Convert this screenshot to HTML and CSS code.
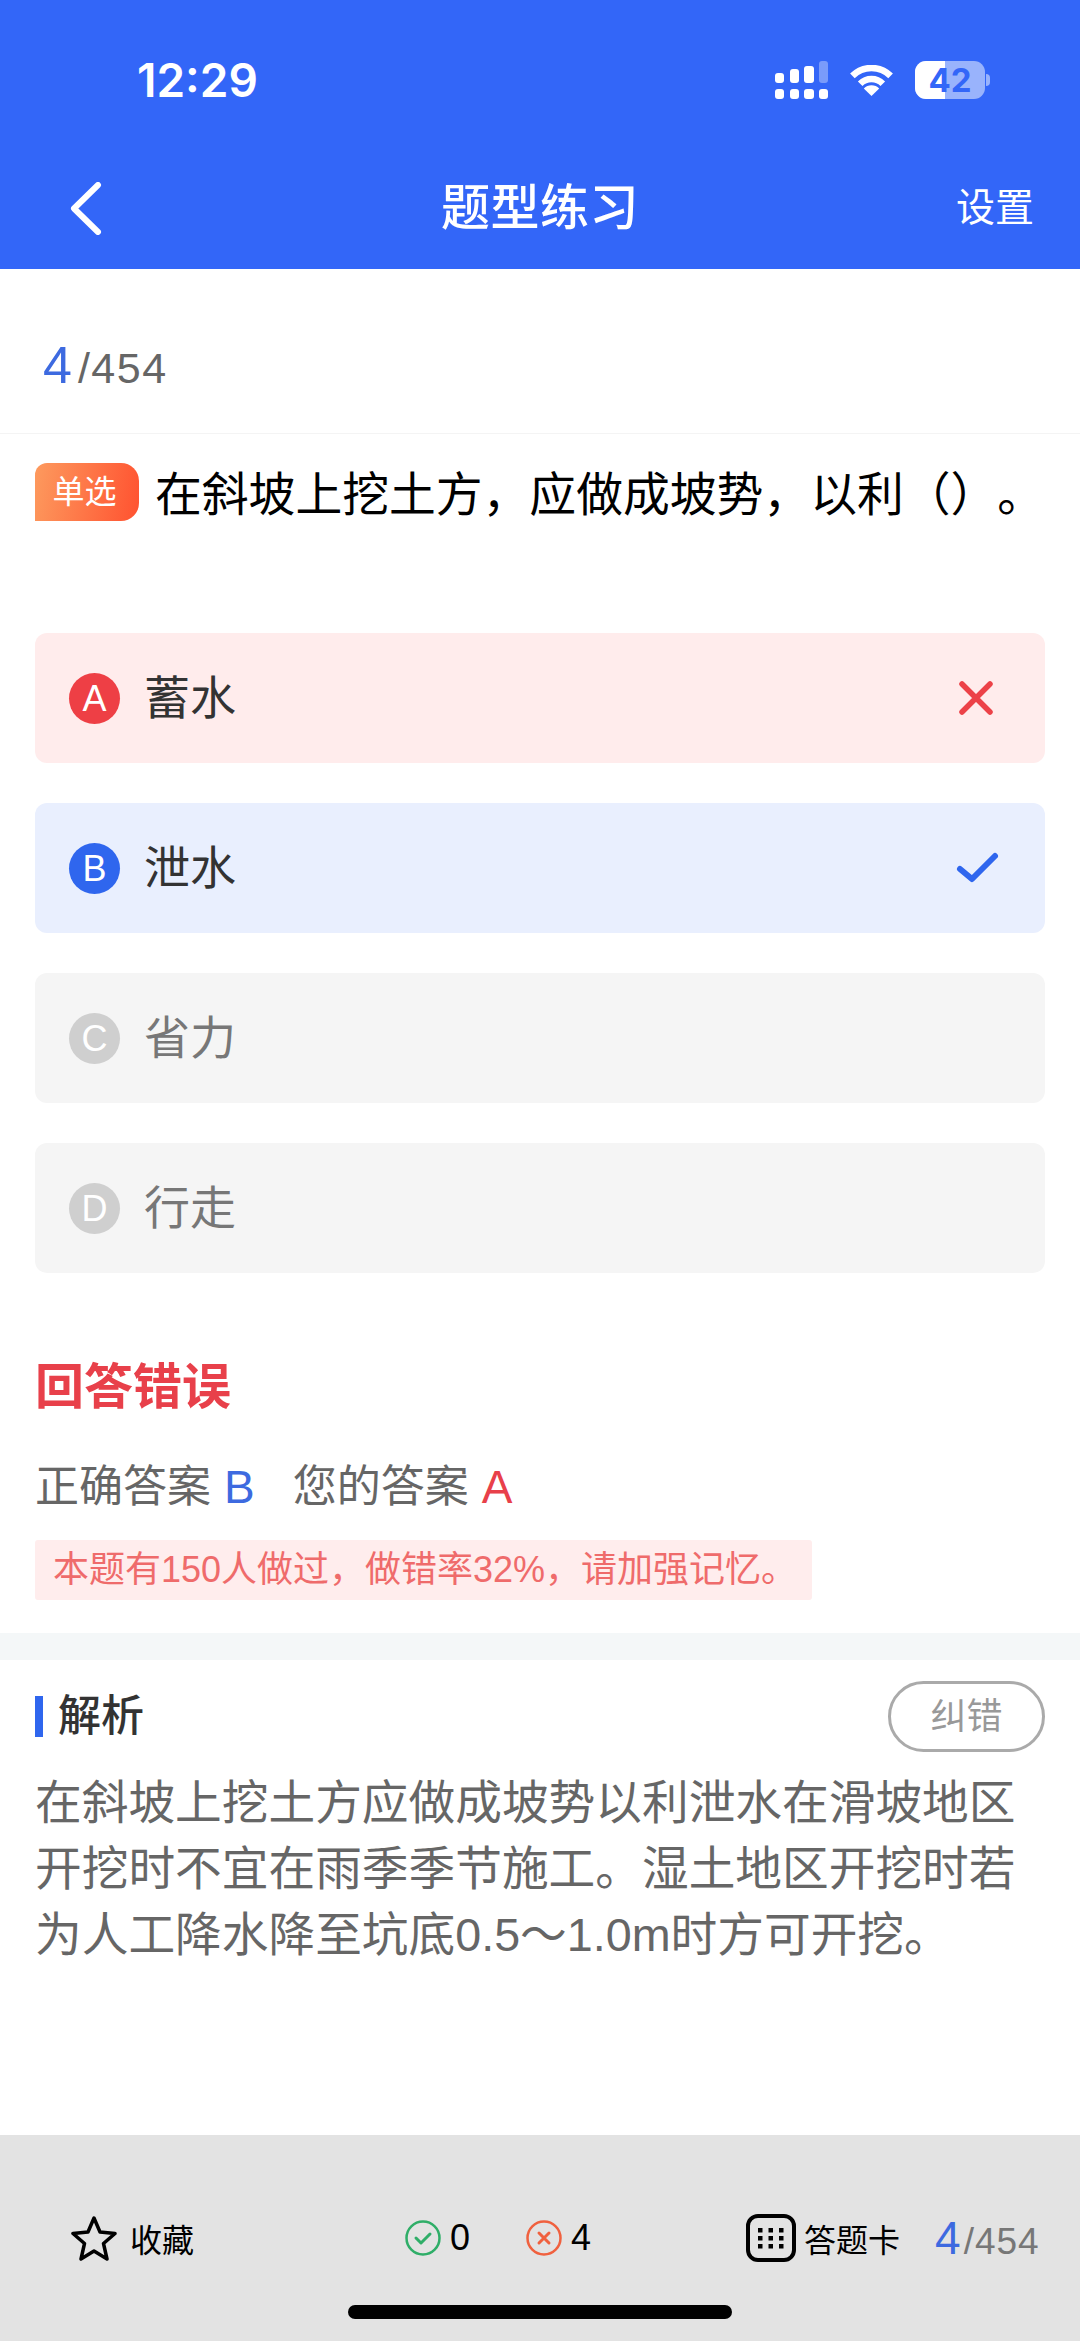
FILE: index.html
```html
<!DOCTYPE html>
<html lang="zh-CN">
<head>
<meta charset="utf-8">
<title>题型练习</title>
<link rel="stylesheet" href="styles.css">
</head>
<body>
<div class="page">
  <header class="header">
    <div class="status">
      <span class="time">12:29</span>
      <div class="status-icons">
        <svg class="signal" width="53" height="38" viewBox="0 0 53 38">
          <rect x="0" y="12" width="9" height="10" rx="3" fill="#fff"/>
          <rect x="15" y="8" width="9" height="14" rx="3" fill="#fff"/>
          <rect x="29" y="5" width="10" height="17" rx="3" fill="#fff"/>
          <rect x="44" y="0" width="9" height="22" rx="3" fill="#fff" fill-opacity=".35"/>
          <rect x="0" y="28" width="9" height="10" rx="3" fill="#fff"/>
          <rect x="15" y="28" width="9" height="10" rx="3" fill="#fff"/>
          <rect x="29" y="28" width="10" height="10" rx="3" fill="#fff"/>
          <rect x="44" y="28" width="9" height="10" rx="3" fill="#fff"/>
        </svg>
        <svg class="wifi" width="47" height="31" viewBox="0 0 47 31">
          <path d="M4.4 10.9A27 27 0 0 1 42.600 10.900" fill="none" stroke="#fff" stroke-width="6.500"/>
          <path d="M12.2 18.700A16 16 0 0 1 34.800 18.700" fill="none" stroke="#fff" stroke-width="6.500"/>
          <path d="M23.500 31L15.800 23.500A11 11 0 0 1 31.200 23.500Z" fill="#fff"/>
        </svg>
        <div class="battery">
          <div class="battery-body">
            <span class="battery-fill"></span>
            <span class="battery-num">42</span>
          </div>
          <span class="battery-nub"></span>
        </div>
      </div>
    </div>
    <nav class="nav">
      <svg class="back" width="33" height="53" viewBox="0 0 33 53">
        <path d="M29 3L5 26.500L29 50" fill="none" stroke="#fff" stroke-width="6" stroke-linecap="round" stroke-linejoin="round"/>
      </svg>
      <h1 class="nav-title">题型练习</h1>
      <span class="nav-action">设置</span>
    </nav>
  </header>

  <div class="counter"><span class="counter-now">4</span><span class="counter-total">/454</span></div>

  <section class="question">
    <span class="tag">单选</span>
    <p class="question-text">在斜坡上挖土方，应做成坡势，以利（）。</p>
  </section>

  <section class="options">
    <div class="option option-wrong">
      <span class="letter">A</span><span class="option-text">蓄水</span>
      <svg class="mark" width="48" height="48" viewBox="0 0 48 48">
        <path d="M10 10L38 38M38 10L10 38" fill="none" stroke="#ec4248" stroke-width="5.500" stroke-linecap="round"/>
      </svg>
    </div>
    <div class="option option-right">
      <span class="letter">B</span><span class="option-text">泄水</span>
      <svg class="mark" width="48" height="48" viewBox="0 0 48 48">
        <path d="M8 25L20 35L43 12" fill="none" stroke="#2f66ee" stroke-width="6" stroke-linecap="round" stroke-linejoin="round"/>
      </svg>
    </div>
    <div class="option option-muted">
      <span class="letter">C</span><span class="option-text">省力</span>
    </div>
    <div class="option option-muted">
      <span class="letter">D</span><span class="option-text">行走</span>
    </div>
  </section>

  <section class="result">
    <h2 class="result-title">回答错误</h2>
    <p class="result-answers">
      <span>正确答案</span><span class="ans-blue">B</span><span class="ans-label">您的答案</span><span class="ans-red">A</span>
    </p>
    <p class="result-note">本题有150人做过，做错率32%，请加强记忆。</p>
  </section>

  <div class="band"></div>

  <section class="analysis">
    <div class="analysis-head">
      <h2 class="analysis-title">解析</h2>
      <span class="report">纠错</span>
    </div>
    <p class="analysis-text">在斜坡上挖土方应做成坡势以利泄水在滑坡地区开挖时不宜在雨季季节施工。湿土地区开挖时若为人工降水降至坑底0.5～1.0m时方可开挖。</p>
  </section>

  <footer class="footer">
    <div class="footer-row">
      <div class="fav">
        <svg width="46" height="47" viewBox="0 0 46 47">
          <path d="M23 3L29 17L44 18.500L32.500 28.500L36 44L23 36L10 44L13.500 28.500L2 18.500L17 17Z" fill="none" stroke="#000" stroke-width="3.500" stroke-linejoin="round"/>
        </svg>
        <span>收藏</span>
      </div>
      <div class="tally">
        <svg width="36" height="36" viewBox="0 0 36 36">
          <circle cx="18" cy="18" r="16.500" fill="none" stroke="#2fae68" stroke-width="2.500"/>
          <path d="M11 18L16 23L25 14" fill="none" stroke="#2fae68" stroke-width="3" stroke-linecap="round" stroke-linejoin="round"/>
        </svg>
        <span>0</span>
      </div>
      <div class="tally tally-wrong">
        <svg width="36" height="36" viewBox="0 0 36 36">
          <circle cx="18" cy="18" r="16.500" fill="none" stroke="#f0613f" stroke-width="2.500"/>
          <path d="M13 13L23 23M23 13L13 23" fill="none" stroke="#f0613f" stroke-width="3" stroke-linecap="round"/>
        </svg>
        <span>4</span>
      </div>
      <div class="card">
        <svg width="50" height="48" viewBox="0 0 50 48">
          <rect x="2" y="2" width="46" height="44" rx="10" fill="none" stroke="#000" stroke-width="4"/>
          <g fill="#000">
            <rect x="12" y="14" width="4.500" height="4.500"/><rect x="22.500" y="14" width="4.500" height="4.500"/><rect x="33" y="14" width="4.500" height="4.500"/>
            <rect x="12" y="22" width="4.500" height="4.500"/><rect x="22.500" y="22" width="4.500" height="4.500"/><rect x="33" y="22" width="4.500" height="4.500"/>
            <rect x="12" y="30" width="4.500" height="4.500"/><rect x="22.500" y="30" width="4.500" height="4.500"/><rect x="33" y="30" width="4.500" height="4.500"/>
          </g>
        </svg>
        <span>答题卡</span>
      </div>
      <div class="footer-count"><span class="footer-now">4</span><span class="footer-total">/454</span></div>
    </div>
    <div class="home"></div>
  </footer>
</div>
</body>
</html>
```

FILE: styles.css
```css
* { box-sizing: border-box; margin: 0; padding: 0; }
html, body { width: 1080px; height: 2341px; background: #fff; }
body { font-family: "Liberation Sans", "Noto Sans CJK SC", sans-serif; overflow: hidden; text-spacing-trim: space-all; }
.page { width: 1080px; height: 2341px; display: flex; flex-direction: column; }

.header { height: 269px; background: #3366f8; color: #fff; }
.status { height: 160px; display: flex; align-items: center; justify-content: space-between; padding: 0 90px 0 137px; }
.time { font-family: Inter, "Liberation Sans", sans-serif; font-size: 46px; font-weight: 600; line-height: 50px; }
.status-icons { display: flex; align-items: center; gap: 20px; }
.wifi { margin-top: 1px; }
.battery { display: flex; align-items: center; margin-left: 0; }
.battery-body { position: relative; width: 70px; height: 38px; border-radius: 11px; background: rgba(255,255,255,.5); overflow: hidden; display: flex; align-items: center; justify-content: center; }
.battery-fill { position: absolute; left: 0; top: 0; bottom: 0; width: 30px; background: #fff; }
.battery-num { position: relative; font-family: Inter, sans-serif; font-size: 33px; font-weight: 700; line-height: 38px; color: #3366f8; }
.battery-nub { width: 4px; height: 12px; margin-left: 1px; border-radius: 0 4px 4px 0; background: rgba(255,255,255,.5); }

.nav { height: 96px; display: grid; grid-template-columns: 1fr auto 1fr; align-items: center; padding: 0 46px; }
.back { margin-left: 23px; }
.nav-title { font-size: 49px; font-weight: 500; line-height: 60px; letter-spacing: .5px; }
.nav-action { justify-self: end; font-size: 39px; line-height: 50px; }

.counter { height: 165px; padding: 68px 0 0 43px; display: flex; align-items: baseline; border-bottom: 1px solid #f4f4f4; line-height: 56px; }
.counter-now { font-size: 52px; color: #3d6ae0; }
.counter-total { margin-left: 6px; font-size: 43px; letter-spacing: 1.500px; color: #666; }

.question { height: 199px; padding: 29px 0 0 35px; display: flex; gap: 16px; align-items: flex-start; }
.tag { width: 104px; height: 58px; padding-right: 5px; border-radius: 12px 18px 18px 0; background: linear-gradient(100deg, #fd9a5e, #ff5230); color: #fff; font-size: 32px; line-height: 58px; text-align: center; }
.question-text { margin-top: 3px; font-size: 46.800px; line-height: 58px; color: #000; white-space: nowrap; }

.options { display: flex; flex-direction: column; gap: 40px; padding: 0 35px; }
.option { height: 130px; border-radius: 12px; display: flex; align-items: center; padding: 0 45px 0 34px; }
.letter { flex: none; width: 51px; height: 51px; border-radius: 50%; color: #fff; font-size: 36px; line-height: 51px; text-align: center; }
.option-text { flex: 1; margin-left: 24px; font-size: 46px; line-height: 60px; color: #333; }
.option-wrong { background: #ffecec; }
.option-wrong .letter { background: #ee3f45; }
.option-right { background: #e9effe; }
.option-right .letter { background: #2f66ee; }
.option-muted { background: #f5f5f5; }
.option-muted .letter { background: #cfcfcf; }
.option-muted .option-text { color: #777; }

.result { padding: 79px 0 0 35px; }
.result-title { font-size: 49px; font-weight: 700; line-height: 70px; color: #e8404a; }
.result-answers { margin-top: 35px; display: flex; align-items: center; font-size: 44px; line-height: 60px; color: #666; }
.ans-blue { margin-left: 13px; color: #3d6ae0; font-size: 46px; }
.ans-label { margin-left: 38px; }
.ans-red { margin-left: 13px; color: #e8404a; font-size: 46px; }
.result-note { margin-top: 23px; width: 777px; height: 60px; padding-left: 18px; border-radius: 3px; background: #ffeded; color: #ef6b6b; font-size: 36px; line-height: 60px; white-space: nowrap; }

.band { height: 27px; margin-top: 33px; background: #f4f7f8; }

.analysis { padding: 21px 35px 0; }
.analysis-head { display: flex; align-items: center; justify-content: space-between; height: 71px; }
.analysis-title { padding-left: 15px; border-left: 8px solid #2f66ee; font-size: 43px; font-weight: 500; line-height: 41px; color: #333; }
.report { width: 157px; height: 71px; border: 3px solid #aaa; border-radius: 36px; color: #999; font-size: 36px; line-height: 65px; text-align: center; }
.analysis-text { margin-top: 18px; font-size: 46.700px; line-height: 66px; color: #666; }

.footer { margin-top: auto; height: 206px; background: #e3e3e3; }
.footer-row { height: 170px; padding-top: 79px; display: flex; align-items: flex-start; color: #000; font-size: 32px; }
.fav, .tally, .card { display: flex; align-items: center; height: 48px; }
.fav { margin-left: 71px; gap: 13px; }
.tally { margin-left: 211px; gap: 9px; font-size: 36px; }
.tally-wrong { margin-left: 56px; }
.card { margin-left: 155px; gap: 8px; }
.footer-count { margin-left: 35px; display: flex; align-items: baseline; line-height: 48px; }
.footer-now { font-size: 46px; color: #3d6ae0; }
.footer-total { margin-left: 3px; font-size: 37px; letter-spacing: 1px; color: #777; }
.home { width: 384px; height: 14px; margin: 0 auto; border-radius: 7px; background: #000; }
```
